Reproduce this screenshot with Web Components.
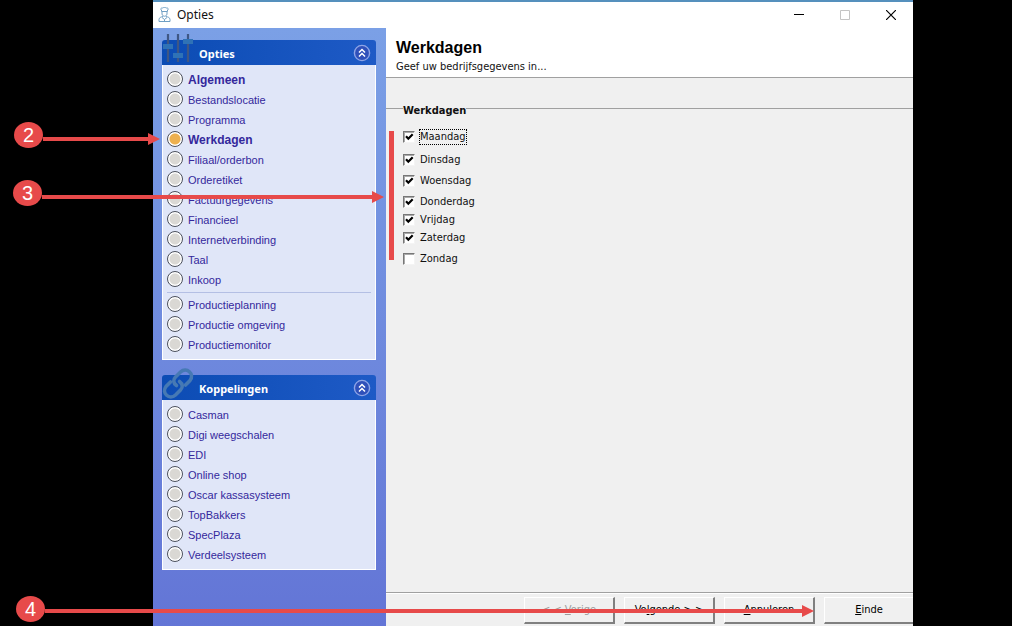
<!DOCTYPE html>
<html lang="nl">
<head>
<meta charset="utf-8">
<title>Opties</title>
<style>
html,body{height:100%}
body{margin:0;background:#000}
</style>
</head>
<body>
<options-page></options-page>
<script>
const define = (name, html, setup) => customElements.define(name, class extends HTMLElement {
  connectedCallback() {
    if (this.shadowRoot) return;
    this.attachShadow({mode: 'open'}).innerHTML = html;
    if (setup) setup(this, this.shadowRoot);
  }
});

/* One choice in the task pane */
define('nav-option', `
<style>
:host{display:block;height:20px;font:11px/18px "Liberation Sans",Arial,sans-serif;color:#34289c}
:host([strong]){font-weight:700;font-size:12px}
label{display:flex;align-items:center;gap:5px;height:20px;white-space:nowrap}
span{padding-top:2px}
input{appearance:none;box-sizing:border-box;flex:none;width:16px;height:16px;margin:0;border:1px solid #4c505c;border-radius:50%;
background:radial-gradient(circle,#dad8d4 0 5px,#fff 6px)}
input:checked{background:radial-gradient(circle,#edb04f 0 5px,#fff 6px)}
</style>
<label><input type="radio" name="page"><span><slot></slot></span></label>`,
(el, root) => { root.querySelector('input').checked = el.hasAttribute('checked'); });

define('nav-panel', `
<style>
:host{display:block;position:relative}
header{display:flex;align-items:center;justify-content:space-between;height:25px;padding:0 5px 0 37px;border-radius:3px 3px 0 0;background:linear-gradient(90deg,#0c4cb4,#1e5ac6)}
h2{margin:0;padding-top:2px;font:700 11px/16px "Noto Sans","Open Sans",sans-serif;color:#fff}
button{display:block;padding:0;border:0;background:none;width:18px;height:18px}
button svg{display:block}
.list{padding:4px 4px 5px;border:solid #fff;border-width:0 1px 1px;background:#e0e6f8}
.icon{position:absolute;left:0;bottom:calc(100% - 25px)}
::slotted(hr){height:1px;margin:3px 0 1px;border:0;background:#b4bfe4}
::slotted(svg){display:block}
</style>
<header><h2></h2><button type="button" aria-label="Inklappen"><svg width="18" height="18" viewBox="0 0 18 18"><circle cx="9" cy="9" r="7.6" fill="#2f50ba" stroke="#8ea4e6" stroke-width="1.4"/><path d="M6 8.500l3-3 3 3M6 12.500l3-3 3 3" fill="none" stroke="#fff" stroke-width="1.500"/></svg></button></header>
<div class="icon"><slot name="icon"></slot></div>
<div class="list"><slot></slot></div>`,
(el, root) => { root.querySelector('h2').textContent = el.getAttribute('heading'); });

/* Classic sunken tick box */
define('day-check', `
<style>
:host{display:block;height:18px;font:11px/14px "DejaVu Sans Condensed","Noto Sans",sans-serif;color:#111;margin-bottom:3px}
:host([gap=wide]){margin-bottom:5px}
:host([gap=none]){margin-bottom:0}
label{display:inline-flex;align-items:center;gap:5px;height:18px}
.box{display:grid;width:12px;height:12px}
input,svg{grid-area:1/1}
input{appearance:none;box-sizing:border-box;width:12px;height:12px;margin:0;background:#fff;border:1px solid;border-color:#777 #f4f4f4 #f4f4f4 #777;box-shadow:inset 1px 1px #aaa}
svg{display:none;pointer-events:none}
input:checked + svg{display:block}
:host([current]) .text{outline:1px dotted #000}
</style>
<label><span class="box"><input type="checkbox"><svg width="12" height="12" viewBox="0 0 12 12"><path d="M3 5.300l2.300 2.400L9.700 3.200" fill="none" stroke="#000" stroke-width="2.200"/></svg></span><span class="text"><slot></slot></span></label>`,
(el, root) => { root.querySelector('input').checked = el.hasAttribute('checked'); });

define('push-button', `
<style>
:host{display:block;flex:none}
button{box-sizing:border-box;width:91px;height:27px;padding:0;border:solid;border-width:1px 2px 2px 1px;border-color:#fff #808080 #808080 #fff;background:#f0f0f0;font:11px/14px "DejaVu Sans Condensed","Noto Sans",sans-serif;color:#000;white-space:pre}
button:disabled{color:#9c9c9c}
</style>
<button type="button"><slot></slot></button>`,
(el, root) => { root.querySelector('button').disabled = el.hasAttribute('disabled'); });

define('title-bar', `
<style>
:host{display:flex;align-items:center;justify-content:space-between;height:26px;padding:0 10px 0 5px;background:#fff}
.name{display:flex;align-items:center;gap:6px;font:12px/16px "Noto Sans","Open Sans",sans-serif;color:#111}
.controls{display:flex;gap:22px}
button{display:block;width:24px;height:24px;padding:0;border:0;background:none}
svg{display:block;margin:0 auto}
</style>
<div class="name"><svg width="13" height="16" viewBox="0 0 13 16" fill="none" stroke="#6f9fc4"><path d="M3.500 4.500V3C2 2 3 .8 4.500 1c1-.7 3-.7 4 0C10 .8 11 2 9.500 3v1.500zM4 5v2c.5 3 4.500 3 5 0V5M5 9.500C3 10 1 10.500 1 12.500v2h11v-2c0-2-2-2.500-4-3M4 10.500l2.500 2 2.500-2M6.500 12.500v2"/></svg><span><slot></slot></span></div>
<div class="controls">
<button type="button" aria-label="Minimaliseren"><svg width="10" height="10"><path d="M0 4.500h10" stroke="#000"/></svg></button>
<button type="button" aria-label="Maximaliseren" disabled><svg width="10" height="10"><path d="M.5.5h9v9h-9z" fill="none" stroke="#c4c4c4"/></svg></button>
<button type="button" aria-label="Sluiten"><svg width="10" height="10"><path d="M0 0l10 10M10 0L0 10" stroke="#000" stroke-width="1.200"/></svg></button>
</div>`);

/* Numbered instruction marker with an arrow to its right */
define('step-arrow', `
<style>
:host{position:absolute;display:flex;align-items:flex-start;height:26px}
b{flex:none;width:29px;height:26px;border-radius:50%;background:#e74a4a;color:#fff;font:20px/26px "Liberation Sans",Arial,sans-serif;text-align:center}
.shaft{display:flex;align-items:center;flex:1;height:12px;margin-top:11px}
:host([level]) .shaft{margin-top:9px}
.shaft::before{content:"";flex:1;height:4px;background:#e74a4a}
.shaft::after{content:"";border:solid transparent;border-width:6px 0 6px 12px;border-left-color:#e74a4a}
</style>
<b><slot></slot></b><div class="shaft"></div>`);

define('options-window', `
<style>
:host{display:flex;flex-direction:column;min-height:100vh;box-sizing:border-box;border-top:2px solid #5590bd;background:#f0f0f0;overflow:hidden}
.body{display:flex;flex:1}
aside{box-sizing:border-box;flex:none;width:233px;padding:12px 10px 12px 9px;display:flex;flex-direction:column;gap:15px;background:linear-gradient(#7ba0e6,#6375d6)}
main{flex:1;min-width:0;display:flex;flex-direction:column}
.head{box-sizing:border-box;height:50px;padding:11px 10px 0;background:#fff;border-bottom:1px solid #a0a0a0}
h1{margin:0;font:700 16px/18px "Liberation Sans",Arial,sans-serif;color:#000}
p{margin:2px 0 0;font:11px/16px "DejaVu Sans Condensed","Noto Sans",sans-serif;color:#111}
.content{flex:1;padding-top:20px}
fieldset{margin:0;padding:10px 17px;border:0;border-top:1px solid #a0a0a0}
legend{padding:6px 0 0;font:700 11px/14px "DejaVu Sans Condensed","Noto Sans",sans-serif;color:#111}
footer{box-sizing:border-box;display:flex;justify-content:flex-end;gap:9px;height:34px;margin-right:-2px;padding-top:4px;border-top:1px solid #a0a0a0;box-shadow:inset 0 1px #fff}
</style>
<title-bar>Opties</title-bar>
<div class="body">
<aside>
<nav-panel heading="Opties">
<svg slot="icon" width="32" height="31" viewBox="0 0 32 31"><path d="M6 0v28M16 0v28M26 0v28" stroke="#3f5784" stroke-width="2.200"/><path d="M1 10h10v5H1zM11 19h10v5H11zM21 5h10v5H21z" fill="#2f72b6"/></svg>
<nav-option strong>Algemeen</nav-option><nav-option>Bestandslocatie</nav-option><nav-option>Programma</nav-option><nav-option strong checked>Werkdagen</nav-option><nav-option>Filiaal/orderbon</nav-option><nav-option>Orderetiket</nav-option><nav-option>Factuurgegevens</nav-option><nav-option>Financieel</nav-option><nav-option>Internetverbinding</nav-option><nav-option>Taal</nav-option><nav-option>Inkoop</nav-option>
<hr>
<nav-option>Productieplanning</nav-option><nav-option>Productie omgeving</nav-option><nav-option>Productiemonitor</nav-option>
</nav-panel>
<nav-panel heading="Koppelingen">
<svg slot="icon" width="32" height="33" viewBox="0 0 32 33"><g fill="none" stroke="#4679b4" stroke-width="3.600" stroke-linecap="round"><path d="M14.500 18.500c-3.500-2.500-3.500-6-1-8.500l5-5c6-5.500 14.500 2 9.500 8.500l-4.500 4.500"/><path d="M17.500 14.500c3.500 2.500 3.500 6 1 8.500l-5 5c-6 5.500-14.500-2-9.500-8.500l4.500-4.500"/></g></svg>
<nav-option>Casman</nav-option><nav-option>Digi weegschalen</nav-option><nav-option>EDI</nav-option><nav-option>Online shop</nav-option><nav-option>Oscar kassasysteem</nav-option><nav-option>TopBakkers</nav-option><nav-option>SpecPlaza</nav-option><nav-option>Verdeelsysteem</nav-option>
</nav-panel>
</aside>
<main>
<div class="head"><h1>Werkdagen</h1><p>Geef uw bedrijfsgegevens in...</p></div>
<div class="content">
<fieldset><legend>Werkdagen</legend>
<day-check checked current gap="wide">Maandag</day-check>
<day-check checked>Dinsdag</day-check>
<day-check checked>Woensdag</day-check>
<day-check checked gap="none">Donderdag</day-check>
<day-check checked gap="none">Vrijdag</day-check>
<day-check checked>Zaterdag</day-check>
<day-check>Zondag</day-check>
</fieldset>
</div>
<footer><push-button disabled>&lt; &lt; <u>V</u>orige</push-button><push-button>Vo<u>l</u>gende &gt; &gt;</push-button><push-button><u>A</u>nnuleren</push-button><push-button><u>E</u>inde</push-button></footer>
</main>
</div>`);

define('options-page', `
<style>
:host{display:block;position:relative;padding:0 99px 0 153px}
.two{left:14px;top:122px;width:146px}
.three{left:13px;top:180px;width:371px}
.four{left:16px;top:596px;right:198px}
.bracket{position:absolute;left:389px;top:131px;width:5px;height:129px;background:#e74a4a}
</style>
<options-window></options-window>
<div class="bracket"></div>
<step-arrow class="two">2</step-arrow>
<step-arrow class="three">3</step-arrow>
<step-arrow class="four" level>4</step-arrow>`);
</script>
</body>
</html>
